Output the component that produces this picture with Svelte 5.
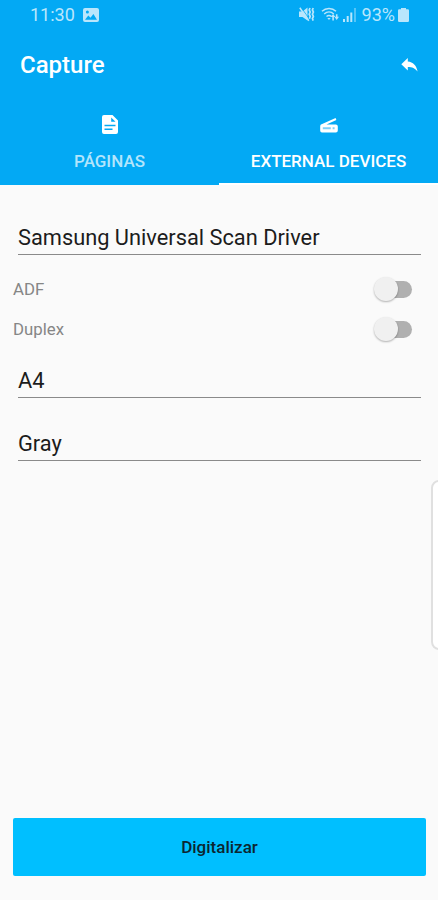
<script lang="ts">
  let activeTab = $state('devices');
  let adf = $state(false);
  let duplex = $state(false);
</script>

<div class="screen">
  <header>
    <div class="status-bar">
      <span class="clock">11:30</span>
      <svg class="picture" width="16" height="14" viewBox="0 0 16 14">
        <path
          fill="currentColor"
          fill-rule="evenodd"
          d="M2 0h12a2 2 0 0 1 2 2v10a2 2 0 0 1-2 2H2a2 2 0 0 1-2-2V2a2 2 0 0 1 2-2zM2 11.7h12L10.4 6 7.5 9.8 5.3 7.6zM4.4 2.4a1.5 1.5 0 1 0 0 3 1.5 1.5 0 0 0 0-3z"
        />
      </svg>
      <div class="indicators">
        <svg width="16" height="15" viewBox="0 0 16 15">
          <path fill="currentColor" d="M0 4.5h3.5L8.5 0.5v13L3.5 10H0z" />
          <path d="M2 0.3l8.500 12" stroke="#03a9f4" stroke-width="0.800" />
          <path d="M0.800 0.800l9 13" stroke="currentColor" stroke-width="1.500" />
          <path
            d="M11 1l-.8 2 1 2-1 2.200 1 2.200-.8 2.300M14.200 1l-.8 2 1 2-1 2.200 1 2.200-1 2.200.8 2"
            fill="none"
            stroke="currentColor"
            stroke-width="1.700"
          />
        </svg>
        <svg class="wifi" width="19" height="15" viewBox="0 0 19 15">
          <g fill="none" stroke="currentColor" stroke-width="1.4">
            <path d="M1 4.200C4.800.5 11.200.5 15 4.200M3.200 7c2.800-2.600 6.800-2.600 9.600 0M5.500 9.600c1.500-1.400 3.500-1.400 5 0" />
          </g>
          <path fill="currentColor" d="M6.300 10.900h3.400L8 13zM9.800 10l2.300-3 2.300 3h-1.500v3.500h-1.600V10zM13.400 9.800h1.500V7.200h1.600v2.600H18l-2.300 3.200z" />
        </svg>
        <svg class="signal" width="13" height="14" viewBox="0 0 13 14">
          <path fill="currentColor" d="M0 11h2v3H0zM3.700 8h2v6h-2zM7.300 4.500h2V14h-2z" />
          <path fill="currentColor" opacity="0.45" d="M11 0h2v14h-2z" />
        </svg>
        <span class="percent">93%</span>
        <svg width="11" height="14" viewBox="0 0 11 14">
          <path fill="currentColor" d="M3 0h5v1.300h1.800A1.200 1.200 0 0 1 11 2.500v10.300A1.200 1.200 0 0 1 9.800 14H1.200A1.200 1.200 0 0 1 0 12.800V2.500a1.200 1.200 0 0 1 1.200-1.200H3z" />
        </svg>
      </div>
    </div>

    <div class="app-bar">
      <h1>Capture</h1>
      <button class="back" aria-label="Back">
        <svg width="17" height="14" viewBox="0 0 17 14">
          <path fill="#fff" d="M6.800 0v3.400c5.200.5 8.800 3.800 9.800 10.200-2.500-3.500-5.400-4.700-9.800-4.700v3.500L0.300 6.200z" />
        </svg>
      </button>
    </div>

    <nav>
      <button class="tab" class:active={activeTab === 'pages'} onclick={() => (activeTab = 'pages')}>
        <svg width="16" height="20" viewBox="0 0 16 20">
          <path
            fill="#fff"
            fill-rule="evenodd"
            d="M2 0h8.500L16 5.500V17a2 2 0 0 1-2 2H2a2 2 0 0 1-2-2V2a2 2 0 0 1 2-2zM9.200 2.500v4.300h4.300zM2.500 9.800v1.500h11V9.800zM2.500 13.600v1.500h8v-1.500z"
          />
        </svg>
        <span>PÁGINAS</span>
      </button>
      <button class="tab" class:active={activeTab === 'devices'} onclick={() => (activeTab = 'devices')}>
        <svg width="18" height="20" viewBox="0 0 18 20">
          <path
            fill="#fff"
            d="M15.600 3l.8 2L6.500 9.500h9.300a2 2 0 0 1 2 2v4a2 2 0 0 1-2 2H2a1.800 1.800 0 0 1-1.800-1.800V11.500c0-1.200.4-1.800 1.400-2.200z"
          />
          <path fill="#7fd0f8" d="M2.800 12.300h8v1.900h-8zM12.600 12.300h2v1.900h-2z" />
        </svg>
        <span>EXTERNAL DEVICES</span>
      </button>
    </nav>
  </header>

  <main>
    <div class="field driver">Samsung Universal Scan Driver</div>
    <label class="option">
      <span>ADF</span>
      <input type="checkbox" class="toggle" bind:checked={adf} />
    </label>
    <label class="option">
      <span>Duplex</span>
      <input type="checkbox" class="toggle" bind:checked={duplex} />
    </label>
    <div class="field paper">A4</div>
    <div class="field color">Gray</div>
    <button class="scan">Digitalizar</button>
  </main>

  <div class="edge-handle"></div>
</div>

<style>
  :global(body) {
    background: #fafafa;
  }

  .screen {
    position: relative;
    display: flex;
    flex-direction: column;
    height: 900px;
    overflow: hidden;
    background: #fafafa;
    font-family: Roboto, sans-serif;
  }

  svg {
    display: block;
    flex: none;
  }

  button {
    border: 0;
    padding: 0;
    background: none;
    font-family: inherit;
    cursor: pointer;
  }

  header {
    display: flex;
    flex-direction: column;
    height: 185px;
    background: #03a9f4;
  }

  .status-bar {
    display: flex;
    align-items: center;
    height: 29px;
    padding: 0 29px 2px 30px;
    color: #b9e6fc;
    font-size: 18px;
  }

  .picture {
    margin-left: 8px;
  }

  .indicators {
    display: flex;
    align-items: center;
    margin-left: auto;
  }

  .wifi {
    margin-left: 6px;
  }

  .signal {
    margin-left: 3px;
  }

  .percent {
    margin: 0 3px 0 6px;
  }

  .app-bar {
    display: flex;
    align-items: center;
    justify-content: space-between;
    height: 68px;
    padding: 0 20px;
  }

  h1 {
    margin: 0;
    color: #fff;
    font-size: 24px;
    font-weight: 500;
  }

  nav {
    display: flex;
    flex: 1;
  }

  .tab {
    display: flex;
    flex: 1;
    flex-direction: column;
    align-items: center;
    padding-top: 16px;
    border-bottom: 2px solid transparent;
    color: #b3e5fc;
    font-size: 17px;
    font-weight: 500;
  }

  .tab span {
    margin-top: 16px;
    line-height: 20px;
  }

  .tab.active {
    border-color: #fff;
    color: #fff;
  }

  main {
    display: flex;
    flex: 1;
    flex-direction: column;
    padding: 36px 12px 24px 13px;
  }

  .field {
    height: 33px;
    margin: 0 5px;
    border-bottom: 1px solid #8a8a8a;
    color: #1c1c1c;
    font-size: 21.8px;
    line-height: 34px;
  }

  .driver {
    margin-bottom: 14px;
  }

  .option {
    display: flex;
    align-items: center;
    justify-content: space-between;
    height: 40px;
    padding-right: 14px;
    color: #868686;
    font-size: 16.8px;
  }

  .toggle {
    display: flex;
    align-items: center;
    width: 33px;
    height: 17px;
    margin: 0;
    border-radius: 9px;
    background: #b0b0b0;
    appearance: none;
    cursor: pointer;
  }

  .toggle::before {
    width: 24px;
    height: 24px;
    margin-left: -5px;
    border-radius: 50%;
    background: #f0f0f0;
    box-shadow: 0 1px 2px rgba(0, 0, 0, 0.3);
    content: '';
    flex: none;
  }

  .toggle:checked::before {
    margin-left: 15px;
    background: #03a9f4;
  }

  .paper {
    margin-top: 15px;
  }

  .color {
    margin-top: 29px;
  }

  .scan {
    height: 58px;
    margin-top: auto;
    border-radius: 2px;
    background: #00bfff;
    color: #0c2630;
    font-size: 17px;
    font-weight: 500;
  }

  .edge-handle {
    position: absolute;
    top: 480px;
    right: -9px;
    width: 12px;
    height: 166px;
    border: 2px solid #e0e0e0;
    border-radius: 8px;
    background: #fff;
  }
</style>
